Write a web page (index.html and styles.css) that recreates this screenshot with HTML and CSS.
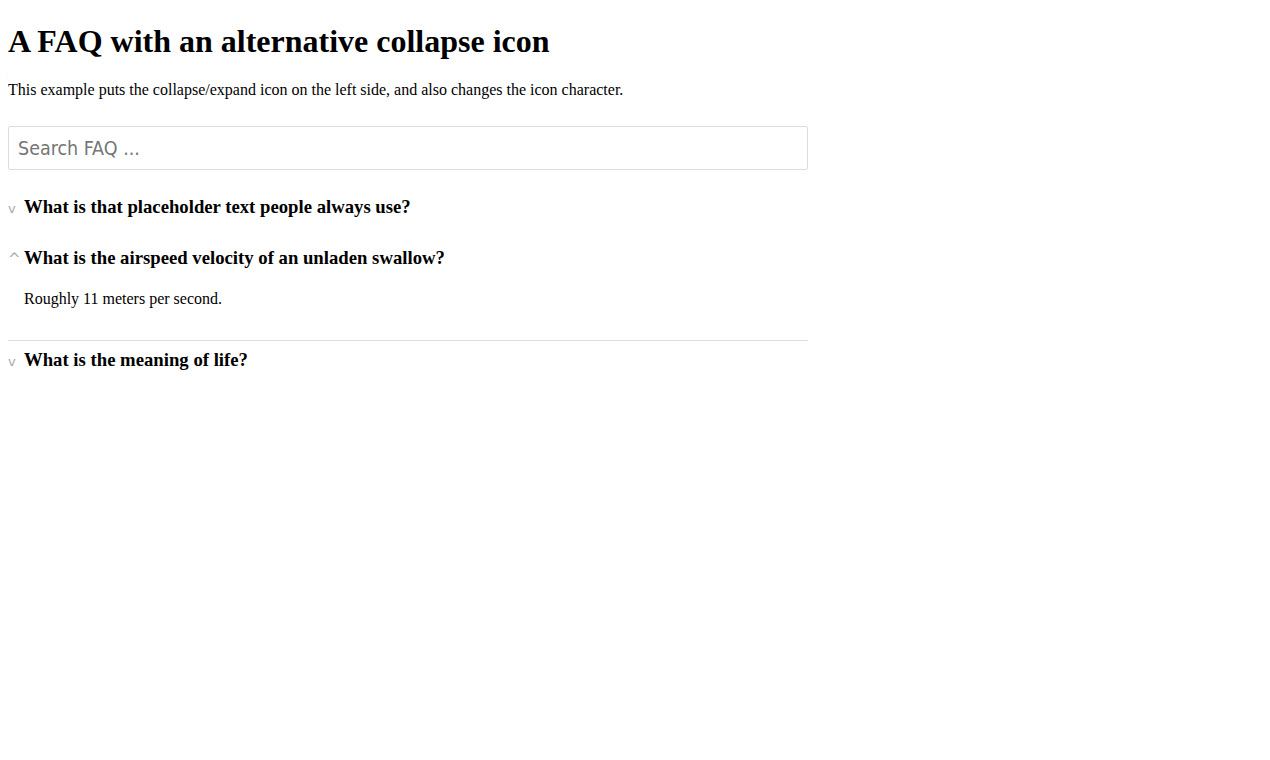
FILE: index.html
```html
<!DOCTYPE html>
<html>
<head>
<meta charset="utf-8">
<title>FAQ</title>
<link rel="stylesheet" href="styles.css">
</head>
<body>
<h1 class="title">A FAQ with an alternative collapse icon</h1>
<p class="intro">This example puts the collapse/expand icon on the left side, and also changes the icon character.</p>
<div class="faq">
  <input class="search" type="text" placeholder="Search FAQ ...">
  <div class="item">
    <h3 class="q"><span class="icon">v</span>What is that placeholder text people always use?</h3>
  </div>
  <div class="item open">
    <h3 class="q"><span class="icon caret">^</span>What is the airspeed velocity of an unladen swallow?</h3>
    <div class="a"><p>Roughly 11 meters per second.</p></div>
  </div>
  <div class="item">
    <h3 class="q"><span class="icon">v</span>What is the meaning of life?</h3>
  </div>
</div>
</body>
</html>
```
FILE: styles.css
```css
body {
  margin: 8px;
  font-family: "Liberation Serif", serif;
  font-size: 16px;
  color: #000;
  background: #fff;
}
.title {
  font-size: 32px;
  margin: 15px 0 21px;
}
.intro {
  margin: 0 0 27px;
}
.faq {
  width: 800px;
}
.search {
  display: block;
  box-sizing: border-box;
  width: 800px;
  height: 44px;
  margin: 0 0 18px;
  padding: 0 9px;
  border: 1px solid #ddd;
  border-radius: 2px;
  font-family: "DejaVu Sans Condensed", "DejaVu Sans", sans-serif;
  font-size: 19.5px;
  outline: none;
}
.search::placeholder {
  color: #757575;
}
.q {
  font-size: 18.72px;
  margin: 0;
  padding: 8px 0;
  display: flex;
  align-items: baseline;
}
.icon {
  width: 16px;
  font-family: "DejaVu Sans", sans-serif;
  font-weight: normal;
  font-size: 13px;
  color: #aaa;
  flex: none;
}
.caret {
  font-size: 15px;
}
.item + .item {
  margin-top: 13px;
}
.a {
  padding-left: 16px;
}
.a p {
  margin: 13px 0 32px;
}
.open {
  border-bottom: 1px solid #ddd;
}
.open + .item {
  margin-top: 0;
}
```
